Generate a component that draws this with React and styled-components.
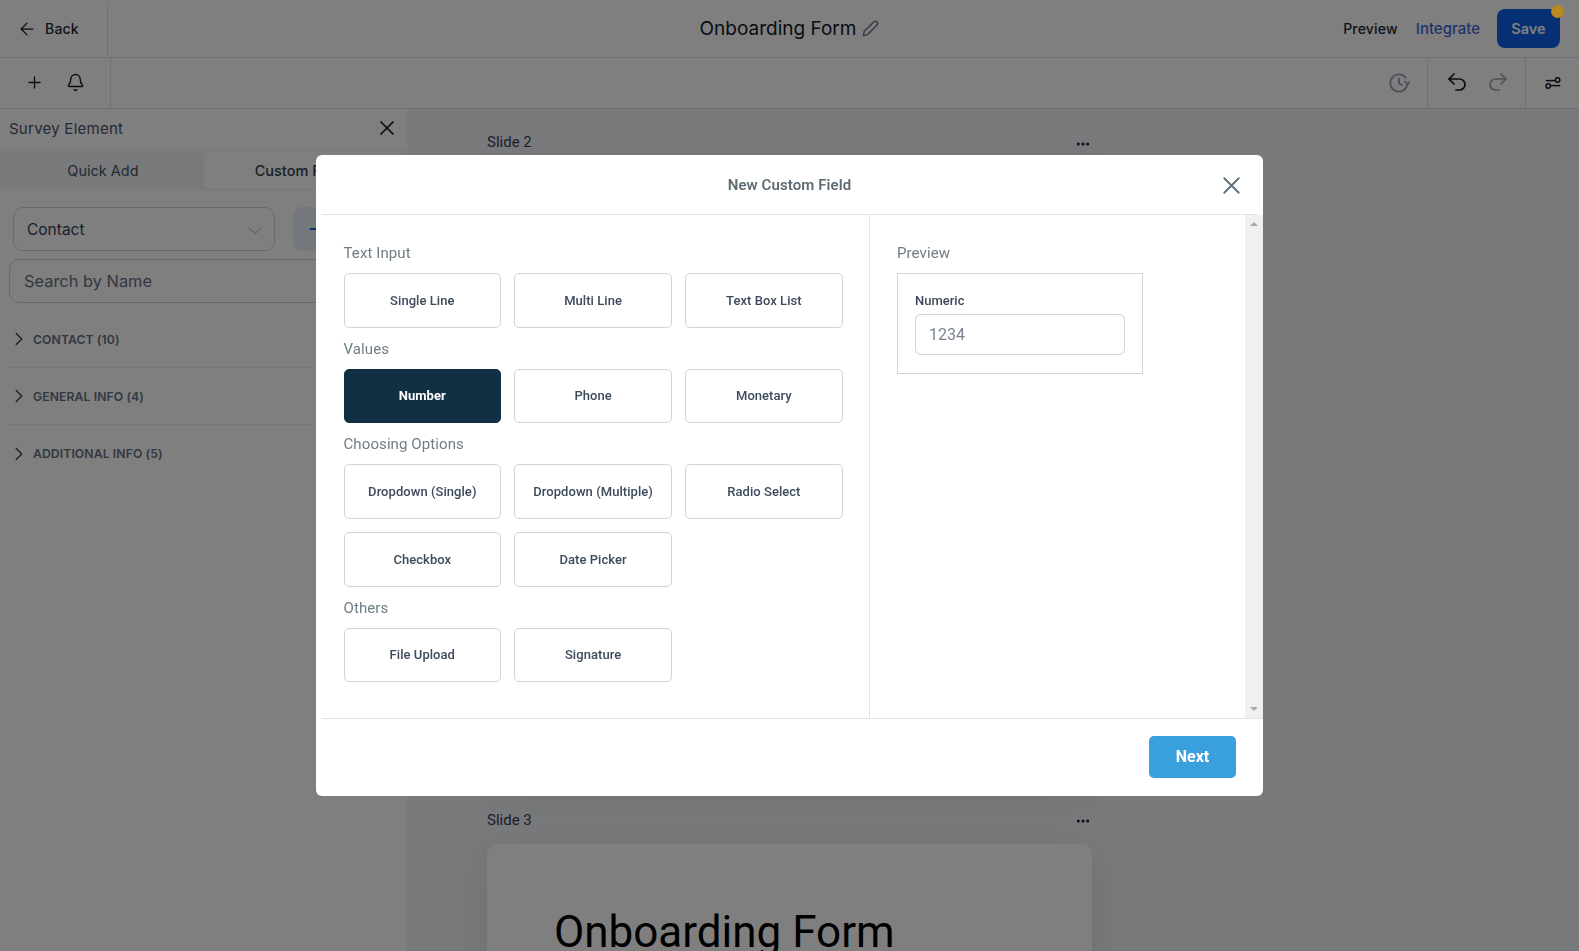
import React from 'react';
import styled, { createGlobalStyle } from 'styled-components';
import { ArrowLeft, Plus, Bell, Undo2, Redo2, X, ChevronRight, ChevronDown, Ellipsis } from 'lucide-react';

const GlobalStyle = createGlobalStyle`
  html, body {
    margin: 0;
    height: 100%;
    overflow: hidden;
    background: #ffffff;
    font-family: 'Inter', 'Liberation Sans', sans-serif;
  }
  * { box-sizing: border-box; }
`;

const sections = [
  { title: 'Text Input', fields: ['Single Line', 'Multi Line', 'Text Box List'] },
  { title: 'Values', fields: ['Number', 'Phone', 'Monetary'] },
  { title: 'Choosing Options', fields: ['Dropdown (Single)', 'Dropdown (Multiple)', 'Radio Select', 'Checkbox', 'Date Picker'] },
  { title: 'Others', fields: ['File Upload', 'Signature'] },
];

const groups = ['CONTACT (10)', 'GENERAL INFO (4)', 'ADDITIONAL INFO (5)'];

function HistoryIcon() {
  return (
    <svg width="22" height="22" viewBox="0 0 22 22" fill="none" stroke="#98a2b3" strokeWidth="1.9" strokeLinecap="round" strokeLinejoin="round">
      <path d="M19.4 12.2A8.6 8.6 0 1 1 17.6 5.6" />
      <path d="M11 6.5V11.4L14 13" />
      <path d="M17 9.6L19.6 12.4L21.6 10" />
    </svg>
  );
}

function SlidersIcon() {
  return (
    <svg width="16" height="16" viewBox="0 0 16 16" fill="none" stroke="#101828" strokeWidth="1.5">
      <path d="M0.8 5.6H10" />
      <circle cx="12.6" cy="5" r="2.2" />
      <circle cx="3.2" cy="11" r="2.2" />
      <path d="M6 10.6H15.2" />
    </svg>
  );
}

function PencilIcon() {
  return (
    <svg width="17" height="17" viewBox="0 0 17 17" fill="none" stroke="#667085" strokeWidth="1.4" strokeLinejoin="round">
      <path d="M1.4 15.6L2.2 11.2L11.8 1.9A2 2 0 0 1 15 4.9L5.6 14.6Z" />
    </svg>
  );
}

export default function App() {
  return (
    <Page>
      <GlobalStyle />
      <Header>
        <BackGroup>
          <ArrowLeft size={20} color="#101828" strokeWidth={1.5} />
          <BackLabel>Back</BackLabel>
        </BackGroup>
        <FormTitle>
          Onboarding Form
          <PencilIcon />
        </FormTitle>
        <HeaderActions>
          <HeaderLink>Preview</HeaderLink>
          <HeaderLink $blue>Integrate</HeaderLink>
          <SaveButton>
            Save
            <SaveDot />
          </SaveButton>
        </HeaderActions>
      </Header>

      <Toolbar>
        <ToolGroup>
          <Plus size={19} color="#101828" strokeWidth={1.7} />
          <Bell size={19} color="#101828" strokeWidth={1.8} />
        </ToolGroup>
        <ToolSpacer />
        <HistorySlot><HistoryIcon /></HistorySlot>
        <UndoGroup>
          <Undo2 size={24} color="#101828" strokeWidth={1.7} />
          <Redo2 size={24} color="#98a2b3" strokeWidth={1.7} />
        </UndoGroup>
        <SettingsSlot><SlidersIcon /></SettingsSlot>
      </Toolbar>

      <Main>
        <Sidebar>
          <SidebarTitle>
            Survey Element
            <X size={24} color="#101828" strokeWidth={1.7} />
          </SidebarTitle>
          <Tabs>
            <Tab>Quick Add</Tab>
            <Tab $active>Custom Fields</Tab>
          </Tabs>
          <FilterRow>
            <Select>
              Contact
              <ChevronDown size={22} color="#98a2b3" strokeWidth={1} />
            </Select>
            <AddButton><Plus size={22} color="#155eef" strokeWidth={2} /></AddButton>
          </FilterRow>
          <Search>Search by Name</Search>
          {groups.map((g) => (
            <Group key={g}>
              <ChevronRight size={22} color="#344054" strokeWidth={1.5} />
              {g}
            </Group>
          ))}
        </Sidebar>

        <Canvas>
          <SlideHead>
            Slide 2
            <Ellipsis size={16} color="#101828" strokeWidth={2.6} />
          </SlideHead>
          <Slide $tall />
          <SlideHead>
            Slide 3
            <Ellipsis size={16} color="#101828" strokeWidth={2.6} />
          </SlideHead>
          <Slide>
            <SlideHeading>Onboarding Form</SlideHeading>
          </Slide>
        </Canvas>
      </Main>

      <Overlay>
        <Modal>
          <ModalHeader>
            <ModalTitle>New Custom Field</ModalTitle>
            <CloseSlot><X size={29} color="#5d6f78" strokeWidth={1.5} /></CloseSlot>
          </ModalHeader>
          <ModalBody>
            <FieldPane>
              {sections.map((s) => (
                <React.Fragment key={s.title}>
                  <PaneLabel>{s.title}</PaneLabel>
                  <FieldGrid>
                    {s.fields.map((f) => (
                      <FieldButton key={f} $active={f === 'Number'}>{f}</FieldButton>
                    ))}
                  </FieldGrid>
                </React.Fragment>
              ))}
            </FieldPane>
            <PreviewPane>
              <PaneLabel>Preview</PaneLabel>
              <PreviewBox>
                <PreviewLabel>Numeric</PreviewLabel>
                <PreviewInput>1234</PreviewInput>
              </PreviewBox>
            </PreviewPane>
            <Scrollbar>
              <ArrowUp />
              <ArrowDown />
            </Scrollbar>
          </ModalBody>
          <ModalFooter>
            <NextButton>Next</NextButton>
          </ModalFooter>
        </Modal>
      </Overlay>
    </Page>
  );
}

const Page = styled.div`
  width: 1579px;
  height: 951px;
  overflow: hidden;
  display: flex;
  flex-direction: column;
  color: #101828;
`;

const Header = styled.header`
  height: 58px;
  flex: none;
  display: grid;
  grid-template-columns: 1fr auto 1fr;
  align-items: center;
  border-bottom: 1px solid #dfe1e4;
  background: #ffffff;
`;

const BackGroup = styled.div`
  width: 108px;
  height: 54px;
  display: flex;
  align-items: center;
  gap: 8px;
  padding-left: 17px;
  border-right: 1px solid #dfe1e4;
`;

const BackLabel = styled.span`
  font-size: 14px;
  font-weight: 500;
  letter-spacing: 0.2px;
  color: #1d2939;
`;

const FormTitle = styled.div`
  display: flex;
  align-items: center;
  gap: 6px;
  font-size: 19px;
  color: #101828;
`;

const HeaderActions = styled.div`
  display: flex;
  justify-content: flex-end;
  align-items: center;
  gap: 18px;
  padding-right: 19px;
`;

const HeaderLink = styled.span`
  font-size: ${(p) => (p.$blue ? '15px' : '14px')};
  font-weight: 500;
  letter-spacing: ${(p) => (p.$blue ? '0' : '0.2px')};
  color: ${(p) => (p.$blue ? '#3f66d8' : '#1d2939')};
`;

const SaveButton = styled.div`
  position: relative;
  width: 63px;
  height: 39px;
  margin-left: -1px;
  display: flex;
  align-items: center;
  justify-content: center;
  border-radius: 8px;
  background: #0f5fe8;
  color: #ffffff;
  font-size: 14.5px;
  font-weight: 600;
`;

const SaveDot = styled.span`
  position: absolute;
  top: -4px;
  right: -4px;
  width: 13px;
  height: 13px;
  border-radius: 50%;
  background: #b8891f;
  z-index: 20;
`;

const Toolbar = styled.div`
  height: 51px;
  flex: none;
  display: flex;
  align-items: center;
  border-bottom: 1px solid #dfe1e4;
  background: #ffffff;
`;

const ToolGroup = styled.div`
  width: 111px;
  height: 100%;
  display: flex;
  align-items: center;
  gap: 22px;
  padding: 0 0 2px 25px;
  border-right: 1px solid #dfe1e4;
`;

const ToolSpacer = styled.div`
  flex: 1;
`;

const HistorySlot = styled.div`
  display: flex;
  padding-right: 17px;
`;

const UndoGroup = styled.div`
  width: 99px;
  height: 100%;
  display: flex;
  align-items: center;
  gap: 17px;
  padding: 0 0 3px 17px;
  border-left: 1px solid #dfe1e4;
  border-right: 1px solid #dfe1e4;
`;

const SettingsSlot = styled.div`
  width: 53px;
  display: flex;
  justify-content: center;
`;

const Main = styled.div`
  flex: 1;
  min-height: 0;
  display: flex;
`;

const Sidebar = styled.aside`
  width: 407px;
  flex: none;
  background: #ffffff;
`;

const SidebarTitle = styled.div`
  height: 40px;
  display: flex;
  align-items: center;
  justify-content: space-between;
  padding: 0 8px 2px 9px;
  font-size: 15px;
  letter-spacing: 0.25px;
  color: #475467;
`;

const Tabs = styled.div`
  height: 42px;
  display: grid;
  grid-template-columns: 204px 200px;
  align-items: center;
  background: #f2f4f7;
`;

const Tab = styled.div`
  height: 36px;
  display: flex;
  align-items: center;
  justify-content: center;
  padding-left: ${(p) => (p.$active ? '0' : '2px')};
  border-radius: 4px;
  font-size: 14.5px;
  font-weight: ${(p) => (p.$active ? 500 : 400)};
  color: ${(p) => (p.$active ? '#344054' : '#475467')};
  background: ${(p) => (p.$active ? '#ffffff' : 'transparent')};
`;

const FilterRow = styled.div`
  display: flex;
  gap: 18px;
  padding: 16px 0 0 13px;
`;

const Select = styled.div`
  width: 262px;
  height: 44px;
  display: flex;
  align-items: center;
  justify-content: space-between;
  padding: 0 8px 0 13px;
  border: 1px solid #d0d5dd;
  border-radius: 10px;
  font-size: 15.5px;
  color: #344054;

  svg {
    margin-top: 4px;
  }
`;

const AddButton = styled.div`
  width: 48px;
  height: 44px;
  display: flex;
  align-items: center;
  justify-content: center;
  border-radius: 8px;
  background: #eaf0fb;
`;

const Search = styled.div`
  height: 44px;
  margin: 8px 11px 8px 9px;
  display: flex;
  align-items: center;
  padding-left: 14px;
  border: 1px solid #d0d5dd;
  border-radius: 10px;
  font-size: 16.4px;
  color: #667085;
`;

const Group = styled.div`
  height: 57px;
  margin-left: 9px;
  display: flex;
  align-items: center;
  gap: 3px;
  border-bottom: 1px solid #eaecf0;
  font-size: 12.2px;
  letter-spacing: 0.1px;
  font-weight: 600;
  color: #667085;

  svg {
    margin-left: -1px;
  }

  &:last-child {
    border-bottom: none;
  }
`;

const Canvas = styled.main`
  flex: 1;
  padding: 21px 0 0 80px;
  background: #f2f4f7;
  overflow: hidden;
`;

const SlideHead = styled.div`
  width: 605px;
  height: 24px;
  display: flex;
  align-items: center;
  justify-content: space-between;
  padding-right: 1px;
  font-family: 'Roboto', sans-serif;
  font-size: 15px;
  color: #344054;

  svg {
    margin-top: 3px;
  }
`;

const Slide = styled.section`
  width: 605px;
  height: ${(p) => (p.$tall ? '618px' : '500px')};
  margin: 12.5px 0 23px;
  padding: 60px 0 0 67px;
  border-radius: 10px;
  background: #ffffff;
  box-shadow: 0 8px 40px rgba(16, 24, 40, 0.1);
`;

const SlideHeading = styled.h1`
  margin: 0;
  font-family: 'Roboto', sans-serif;
  font-size: 44px;
  font-weight: 400;
  line-height: 56px;
  color: #000000;
`;

const Overlay = styled.div`
  position: fixed;
  inset: 0;
  z-index: 10;
  display: flex;
  justify-content: center;
  align-items: flex-start;
  padding-top: 155px;
  background: rgba(0, 0, 0, 0.5);
`;

const Modal = styled.div`
  width: 947px;
  height: 641px;
  display: flex;
  flex-direction: column;
  border-radius: 6px;
  background: #ffffff;
  font-family: 'Roboto', sans-serif;
  overflow: hidden;
`;

const ModalHeader = styled.div`
  position: relative;
  height: 60px;
  flex: none;
  margin: 0 6px;
  display: flex;
  align-items: center;
  justify-content: center;
  border-bottom: 1px solid #dfe3e8;
`;

const ModalTitle = styled.div`
  font-size: 15px;
  font-weight: 600;
  letter-spacing: 0.1px;
  color: #5d6b73;
`;

const CloseSlot = styled.div`
  position: absolute;
  right: 11px;
  top: 16px;
  display: flex;
`;

const ModalBody = styled.div`
  flex: 1;
  min-height: 0;
  display: flex;
`;

const FieldPane = styled.div`
  width: 554px;
  flex: none;
  padding: 28px 0 0 27.5px;
  border-right: 1px solid #dfe3e8;
`;

const PaneLabel = styled.div`
  height: 20px;
  margin-bottom: 10px;
  font-size: 15px;
  letter-spacing: 0.1px;
  line-height: 20px;
  color: #6f7d85;
`;

const FieldGrid = styled.div`
  display: grid;
  grid-template-columns: repeat(3, 157.6px);
  column-gap: 13.2px;
  row-gap: 13.5px;
  margin-bottom: 11px;
`;

const FieldButton = styled.div`
  height: 54.5px;
  display: flex;
  align-items: center;
  justify-content: center;
  border: 1px solid ${(p) => (p.$active ? '#123044' : '#d0d2df')};
  border-radius: 5px;
  background: ${(p) => (p.$active ? '#123044' : '#ffffff')};
  color: ${(p) => (p.$active ? '#ffffff' : '#3d4a5c')};
  font-size: 13px;
  letter-spacing: 0.05px;
  font-weight: ${(p) => (p.$active ? 700 : 500)};
`;

const PreviewPane = styled.div`
  flex: 1;
  padding: 28px 0 0 27px;
`;

const PreviewBox = styled.div`
  width: 246px;
  height: 101px;
  padding: 17px 17px 0;
  border: 1px solid #d0d2df;
`;

const PreviewLabel = styled.div`
  height: 19px;
  margin-bottom: 4px;
  font-size: 13px;
  font-weight: 500;
  line-height: 19px;
  color: #3d4a5c;
`;

const PreviewInput = styled.div`
  width: 210px;
  height: 41px;
  display: flex;
  align-items: center;
  padding-left: 13px;
  border: 1px solid #d0d2df;
  border-radius: 6px;
  font-size: 16px;
  color: #7a8490;
`;

const Scrollbar = styled.div`
  width: 18px;
  flex: none;
  display: flex;
  flex-direction: column;
  justify-content: space-between;
  align-items: center;
  padding: 7px 0;
  background: #f0f0f0;
`;

const ArrowUp = styled.span`
  border: 4px solid transparent;
  border-top: none;
  border-bottom: 4px solid #a9a9a9;
`;

const ArrowDown = styled.span`
  border: 4px solid transparent;
  border-bottom: none;
  border-top: 4px solid #a9a9a9;
`;

const ModalFooter = styled.div`
  height: 78px;
  flex: none;
  margin-left: 6px;
  display: flex;
  align-items: center;
  justify-content: flex-end;
  padding: 0 27px 2px 0;
  border-top: 1px solid #dfe3e8;
`;

const NextButton = styled.div`
  width: 87px;
  height: 42px;
  display: flex;
  align-items: center;
  justify-content: center;
  border-radius: 5px;
  background: #3a9fdd;
  color: #ffffff;
  font-size: 16px;
  font-weight: 700;
`;
